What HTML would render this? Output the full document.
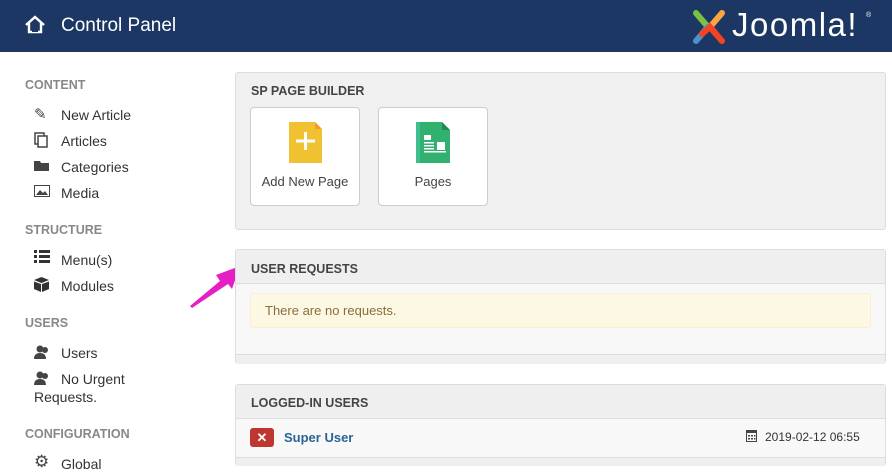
<!DOCTYPE html>
<html><head><meta charset="utf-8"><style>
*{margin:0;padding:0;box-sizing:border-box}
body{width:892px;height:470px;overflow:hidden;background:#fff;font-family:"Liberation Sans",sans-serif;font-size:13px;color:#333;position:relative}
.hdr{position:absolute;left:0;top:0;width:892px;height:52px;background:#1c3764}
.hdr .t{position:absolute;left:61px;top:15px;color:#fff;font-size:19px}
.sec{position:absolute;left:25px;color:#888;font-weight:bold;font-size:12.5px}
.it{position:absolute;left:61px;color:#333;font-size:14px}
.ic{position:absolute;left:34px}
.panel{position:absolute;left:235px;width:651px;background:#f0f0f0;border:1px solid #ddd;border-radius:3px}
.ph{font-weight:bold;font-size:12.5px;color:#444;position:absolute;left:15px}
.card{position:absolute;top:34px;width:110px;height:99px;background:#fff;border:1px solid #ccc;border-radius:4px;text-align:center;font-size:13px;color:#444}
</style></head><body>
<div class="hdr">
<svg style="position:absolute;left:24px;top:15px" width="22" height="20" viewBox="0 0 22 20"><path d="M2 10 L11 2 L20 10 M5 8 V17 H17 V8" fill="none" stroke="#fff" stroke-width="2.4"/><rect x="8" y="12" width="6" height="5" fill="#1c3764"/></svg>
<div class="t">Control Panel</div>
<svg style="position:absolute;left:690px;top:8px" width="38" height="38" viewBox="0 0 38 38">
<path d="M6 5 L18 19 L12 26" stroke="#7ac143" stroke-width="6" fill="none" stroke-linecap="round"/>
<path d="M32 5 L20 19 L26 26" stroke="#f9a541" stroke-width="6" fill="none" stroke-linecap="round"/>
<path d="M6 33 L18 19" stroke="#5091cd" stroke-width="6" fill="none" stroke-linecap="round"/>
<path d="M32 33 L20 19 L12 26" stroke="#f44321" stroke-width="6" fill="none" stroke-linecap="round"/>
</svg>
<div style="position:absolute;left:732px;top:6px;color:#fff;font-size:33px;letter-spacing:1.5px">Joomla!</div>
<div style="position:absolute;left:866px;top:12px;color:#fff;font-size:7px">®</div>
</div>

<div class="sec" style="top:78px">CONTENT</div>
<div class="ic" style="top:105px;font-size:15px;color:#444">✎</div><div class="it" style="top:107px">New Article</div>
<div class="ic" style="top:132px"><svg width="14" height="16"><rect x="1" y="1" width="9" height="11" fill="none" stroke="#444" stroke-width="1.5"/><rect x="4" y="4" width="9" height="11" fill="#fff" stroke="#444" stroke-width="1.5"/></svg></div><div class="it" style="top:133px">Articles</div>
<div class="ic" style="top:160px"><svg width="16" height="12"><path d="M0 1 H6 L7 3 H15 V11 H0Z" fill="#444"/></svg></div><div class="it" style="top:159px">Categories</div>
<div class="ic" style="top:185px"><svg width="16" height="12"><rect x="0.5" y="0.5" width="15" height="11" fill="none" stroke="#444"/><path d="M2 10 L6 5 L9 8 L11 6 L14 10Z" fill="#444"/></svg></div><div class="it" style="top:185px">Media</div>
<div class="sec" style="top:223px">STRUCTURE</div>
<div class="ic" style="top:250px"><svg width="16" height="14"><rect x="0" y="0" width="3" height="3" fill="#333"/><rect x="5" y="0" width="11" height="3" fill="#333"/><rect x="0" y="5" width="3" height="3" fill="#333"/><rect x="5" y="5" width="11" height="3" fill="#333"/><rect x="0" y="10" width="3" height="3" fill="#333"/><rect x="5" y="10" width="11" height="3" fill="#333"/></svg></div><div class="it" style="top:252px">Menu(s)</div>
<div class="ic" style="top:277px"><svg width="15" height="15"><path d="M7.5 0 L15 3 L7.5 6 L0 3Z M0 4.5 L7 7 V15 L0 12Z M8 7 L15 4.5 V12 L8 15Z" fill="#333"/></svg></div><div class="it" style="top:278px">Modules</div>
<div class="sec" style="top:316px">USERS</div>
<div class="ic" style="top:345px"><svg width="16" height="14"><circle cx="6" cy="4" r="3.5" fill="#444"/><path d="M0 14 Q0 8 6 8 Q12 8 12 14Z" fill="#444"/><circle cx="11" cy="5" r="3" fill="#444"/></svg></div><div class="it" style="top:345px">Users</div>
<div class="ic" style="top:371px"><svg width="16" height="14"><circle cx="6" cy="4" r="3.5" fill="#444"/><path d="M0 14 Q0 8 6 8 Q12 8 12 14Z" fill="#444"/><circle cx="11" cy="5" r="3" fill="#444"/></svg></div><div class="it" style="top:371px">No Urgent</div>
<div class="it" style="top:389px;left:34px">Requests.</div>
<div class="sec" style="top:427px">CONFIGURATION</div>
<div class="ic" style="top:453px;font-size:17px;color:#444;line-height:17px">⚙</div><div class="it" style="top:456px">Global</div>

<svg style="position:absolute;left:188px;top:264px" width="54" height="44"><path d="M2 42 L32 17 L28 11 L52 2 L44 25 L40 20 L4 44Z" fill="#e61fc4"/></svg>

<div class="panel" style="top:72px;height:158px">
<div class="ph" style="top:11px">SP PAGE BUILDER</div>
<div class="card" style="left:14px">
<svg style="position:absolute;left:38px;top:14px" width="34" height="42"><path d="M0 0 H26 L33 7 V41 H0Z" fill="#f0c232"/><path d="M26 0 L33 7 H26Z" fill="#f29b31"/><rect x="15" y="10" width="3" height="18" fill="#fff"/><rect x="7" y="17.5" width="19" height="3" fill="#fff"/></svg>
<div style="position:absolute;top:66px;width:100%">Add New Page</div></div>
<div class="card" style="left:142px">
<svg style="position:absolute;left:37px;top:14px" width="36" height="42"><path d="M0 0 H22 L22 41 H0Z" fill="#3fbf8f"/><path d="M4 0 H26 L34 8 V41 H4Z" fill="#31b06f"/><path d="M26 0 L34 8 H26Z" fill="#238a55"/><rect x="8" y="13" width="7" height="5" fill="#fff"/><rect x="8" y="20" width="10" height="1.5" fill="#fff"/><rect x="8" y="23" width="10" height="1.5" fill="#fff"/><rect x="8" y="26" width="10" height="1.5" fill="#fff"/><rect x="8" y="29" width="22" height="1.5" fill="#fff"/><rect x="21" y="20" width="8" height="8" fill="#fff"/></svg>
<div style="position:absolute;top:66px;width:100%">Pages</div></div>
</div>

<div class="panel" style="top:249px;height:115px;background:#f8f8f8">
<div style="position:absolute;left:0;top:0;width:100%;height:34px;background:#efefef;border-bottom:1px solid #ddd"></div>
<div class="ph" style="top:12px">USER REQUESTS</div>
<div style="position:absolute;left:14px;top:43px;width:621px;height:35px;background:#fcf8e3;border:1px solid #fbeed5;border-radius:3px;color:#8a6d3b;font-size:13px;padding:9px 14px">There are no requests.</div>
<div style="position:absolute;left:0;top:104px;width:100%;height:10px;background:#efefef;border-top:1px solid #ddd"></div>
</div>

<div class="panel" style="top:384px;height:82px;background:#f8f8f8">
<div style="position:absolute;left:0;top:0;width:100%;height:34px;background:#efefef;border-bottom:1px solid #ddd"></div>
<div class="ph" style="top:11px">LOGGED-IN USERS</div>
<div style="position:absolute;left:14px;top:43px;width:24px;height:19px;background:#bd362f;border-radius:3px;color:#fff;font-weight:bold;text-align:center;font-size:13px;line-height:19px">✕</div>
<div style="position:absolute;left:48px;top:45px;color:#2a6496;font-weight:bold;font-size:13px">Super User</div>
<svg style="position:absolute;left:510px;top:45px" width="11" height="12"><rect x="0.5" y="0.5" width="10" height="11" fill="none" stroke="#444"/><rect x="0" y="0" width="11" height="3" fill="#444"/><path d="M2 5h2v1.5H2zM5 5h2v1.5H5zM8 5h1.5v1.5H8zM2 8h2v1.5H2zM5 8h2v1.5H5zM8 8h1.5v1.5H8z" fill="#444"/></svg>
<div style="position:absolute;left:529px;top:45px;font-size:12px;color:#333">2019-02-12 06:55</div>
<div style="position:absolute;left:0;top:72px;width:100%;height:9px;background:#efefef;border-top:1px solid #ddd"></div>
</div>
</body></html>
